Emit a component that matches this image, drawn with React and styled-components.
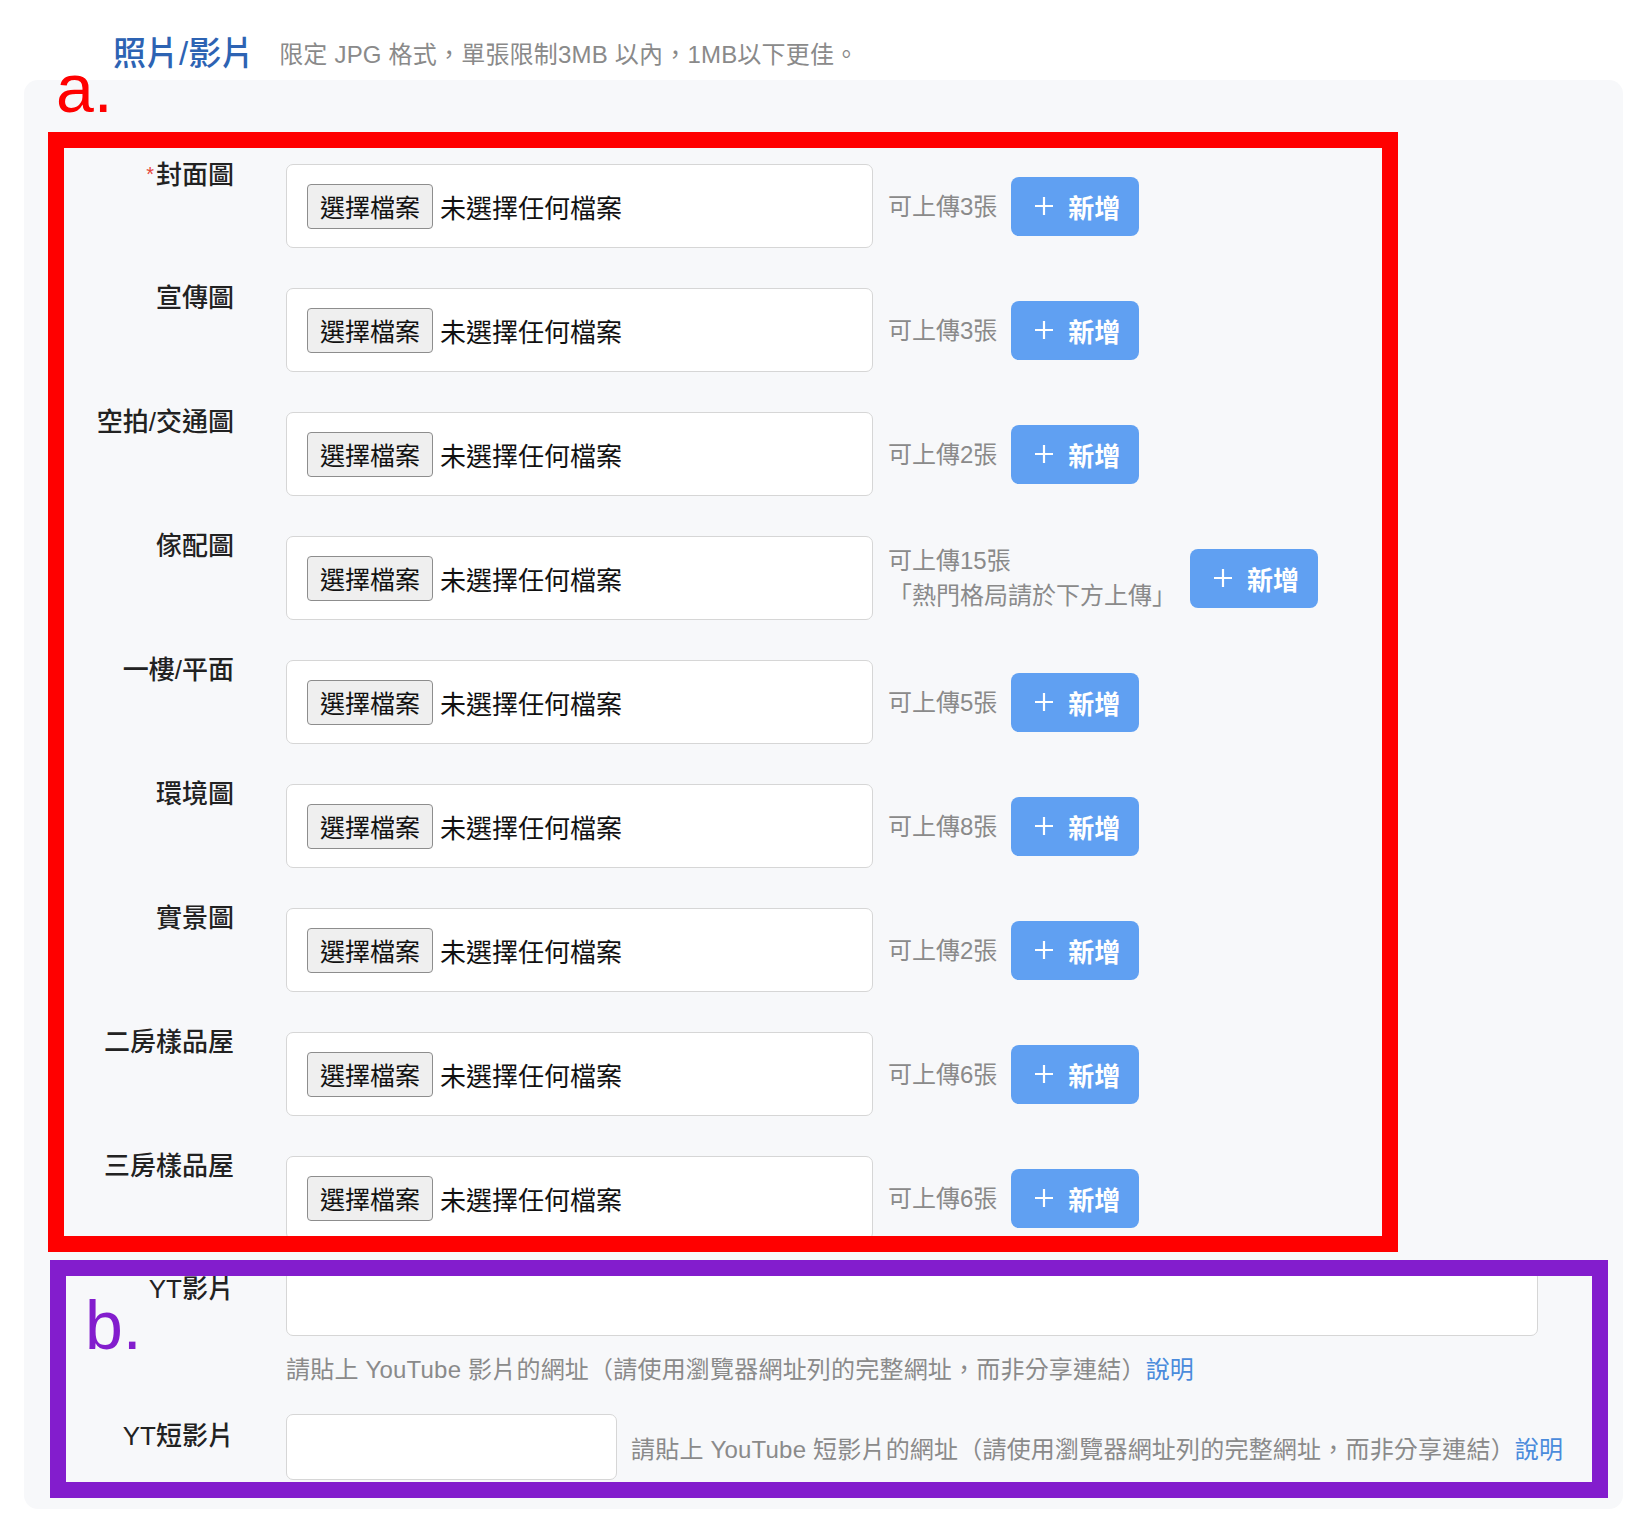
import styled, { createGlobalStyle } from "styled-components";

const GlobalStyle = createGlobalStyle`
  html, body {
    margin: 0;
    padding: 0;
    background: #fff;
  }
  body {
    font-family: "Liberation Sans", "Noto Sans CJK TC", sans-serif;
    color: #222;
  }
  * {
    box-sizing: border-box;
  }
`;

const Page = styled.div`
  position: relative;
  width: 1646px;
  padding: 0 23px 23px 24px;
`;

const Header = styled.div`
  display: flex;
  align-items: center;
  gap: 25px;
  height: 80px;
  padding: 28px 0 0 89px;
`;

const Title = styled.h2`
  margin: 0;
  font-size: 33px;
  line-height: 40px;
  font-weight: 500;
  color: #2d63b3;
`;

const SubTitle = styled.span`
  font-size: 24px;
  line-height: 30px;
  letter-spacing: 0.2px;
  color: #8a8a8a;
  margin-top: 2px;
`;

const Card = styled.div`
  width: 1599px;
  background: #f7f8fa;
  border-radius: 14px;
  padding: 84px 0 29px 24px;
`;

const Row = styled.div`
  display: flex;
  align-items: center;
  height: 84px;
  & + & {
    margin-top: 40px;
  }
`;

const Label = styled.label`
  flex-shrink: 0;
  align-self: flex-start;
  width: 186px;
  margin-top: ${(p) => p.$top || 0}px;
  text-align: right;
  font-size: 26px;
  line-height: 26px;
  font-weight: 500;
  color: #222;
  white-space: nowrap;
`;

const Req = styled.span`
  color: #e5463b;
  font-size: 20px;
  vertical-align: 3px;
  margin-right: 2px;
`;

const FileBox = styled.div`
  display: flex;
  align-items: center;
  flex-shrink: 0;
  margin-left: 52px;
  width: 587px;
  height: 84px;
  padding-left: 20px;
  background: #fff;
  border: 1px solid #d6d6d6;
  border-radius: 7px;
`;

const PickButton = styled.button`
  display: inline-flex;
  align-items: center;
  height: 45px;
  padding: 0 12px;
  border: 1.5px solid #8d8d8d;
  border-radius: 4px;
  background: #efefef;
  font-family: inherit;
  font-size: 25px;
  color: #111;
`;

const FileName = styled.span`
  margin-left: 7px;
  font-size: 26px;
  color: #111;
`;

const Hint = styled.div`
  margin-left: 15px;
  font-size: 24px;
  line-height: 35px;
  color: #8a8a8a;
  white-space: nowrap;
`;

const AddButton = styled.button`
  display: flex;
  align-items: center;
  justify-content: center;
  gap: 14px;
  flex-shrink: 0;
  margin-left: 14px;
  width: 128px;
  height: 59px;
  padding: 0 0 0 4px;
  border: none;
  border-radius: 8px;
  background: #60a0f2;
  color: #fff;
  font-family: inherit;
  font-size: 26px;
  font-weight: 600;
  cursor: pointer;
`;

const Field = styled.div`
  display: flex;
  align-items: ${(p) => p.$align || "flex-start"};
  margin-top: ${(p) => p.$gap || 0}px;
`;

const TextInput = styled.input`
  flex-shrink: 0;
  margin-left: 52px;
  width: ${(p) => p.$width}px;
  height: 66px;
  background: #fff;
  border: 1px solid #d6d6d6;
  border-radius: 7px;
  font-family: inherit;
  font-size: 24px;
  padding: 0 16px;
  outline: none;
`;

const Help = styled.div`
  margin: ${(p) => (p.$inline ? "6px 0 0 14px" : "17px 0 0 238px")};
  font-size: 24px;
  line-height: 34px;
  letter-spacing: 0.2px;
  color: #8a8a8a;
  white-space: nowrap;
`;

const Link = styled.a`
  color: #4a8bdc;
  text-decoration: none;
`;

const Frame = styled.div`
  position: absolute;
  pointer-events: none;
  border: 16px solid ${(p) => p.$color};
`;

const RedFrame = styled(Frame)`
  left: 48px;
  top: 132px;
  width: 1350px;
  height: 1120px;
`;

const PurpleFrame = styled(Frame)`
  left: 50px;
  top: 1260px;
  width: 1558px;
  height: 238px;
`;

const Mark = styled.span`
  position: absolute;
  font-family: "Liberation Sans", sans-serif;
  font-size: 68px;
  line-height: 68px;
  color: ${(p) => p.$color};
`;

const MarkA = styled(Mark)`
  left: 56px;
  top: 54px;
`;

const MarkB = styled(Mark)`
  left: 85px;
  top: 1291px;
`;

const PlusIcon = () => (
  <svg width="20" height="20" viewBox="0 0 20 20" aria-hidden="true">
    <path d="M10 1v18M1 10h18" stroke="#fff" strokeWidth="2.2" fill="none" />
  </svg>
);

const uploads = [
  { label: "封面圖", limit: "可上傳3張", required: true },
  { label: "宣傳圖", limit: "可上傳3張" },
  { label: "空拍/交通圖", limit: "可上傳2張" },
  { label: "傢配圖", limit: "可上傳15張", note: "「熱門格局請於下方上傳」" },
  { label: "一樓/平面", limit: "可上傳5張" },
  { label: "環境圖", limit: "可上傳8張" },
  { label: "實景圖", limit: "可上傳2張" },
  { label: "二房樣品屋", limit: "可上傳6張" },
  { label: "三房樣品屋", limit: "可上傳6張" },
];

const App = () => {
  return (
    <Page>
      <GlobalStyle />
      <Header>
        <Title>照片/影片</Title>
        <SubTitle>限定 JPG 格式，單張限制3MB 以內，1MB以下更佳。</SubTitle>
      </Header>
      <Card>
        {uploads.map((u) => (
          <Row key={u.label}>
            <Label $top={-3}>
              {u.required && <Req>*</Req>}
              {u.label}
            </Label>
            <FileBox>
              <PickButton type="button">選擇檔案</PickButton>
              <FileName>未選擇任何檔案</FileName>
            </FileBox>
            <Hint>
              {u.limit}
              {u.note && (
                <>
                  <br />
                  {u.note}
                </>
              )}
            </Hint>
            <AddButton type="button">
              <PlusIcon />
              新增
            </AddButton>
          </Row>
        ))}

        <Field $gap={30}>
          <Label $top={6}>YT影片</Label>
          <TextInput type="text" $width={1252} />
        </Field>
        <Help>
          請貼上 YouTube 影片的網址（請使用瀏覽器網址列的完整網址，而非分享連結）
          <Link href="#">說明</Link>
        </Help>

        <Field $gap={27} $align="center">
          <Label $top={9}>YT短影片</Label>
          <TextInput type="text" $width={331} />
          <Help $inline>
            請貼上 YouTube 短影片的網址（請使用瀏覽器網址列的完整網址，而非分享連結）
            <Link href="#">說明</Link>
          </Help>
        </Field>
      </Card>

      <RedFrame $color="#ff0000" />
      <PurpleFrame $color="#831dcd" />
      <MarkA $color="#ff0000">a.</MarkA>
      <MarkB $color="#831dcd">b.</MarkB>
    </Page>
  );
};

export default App;
